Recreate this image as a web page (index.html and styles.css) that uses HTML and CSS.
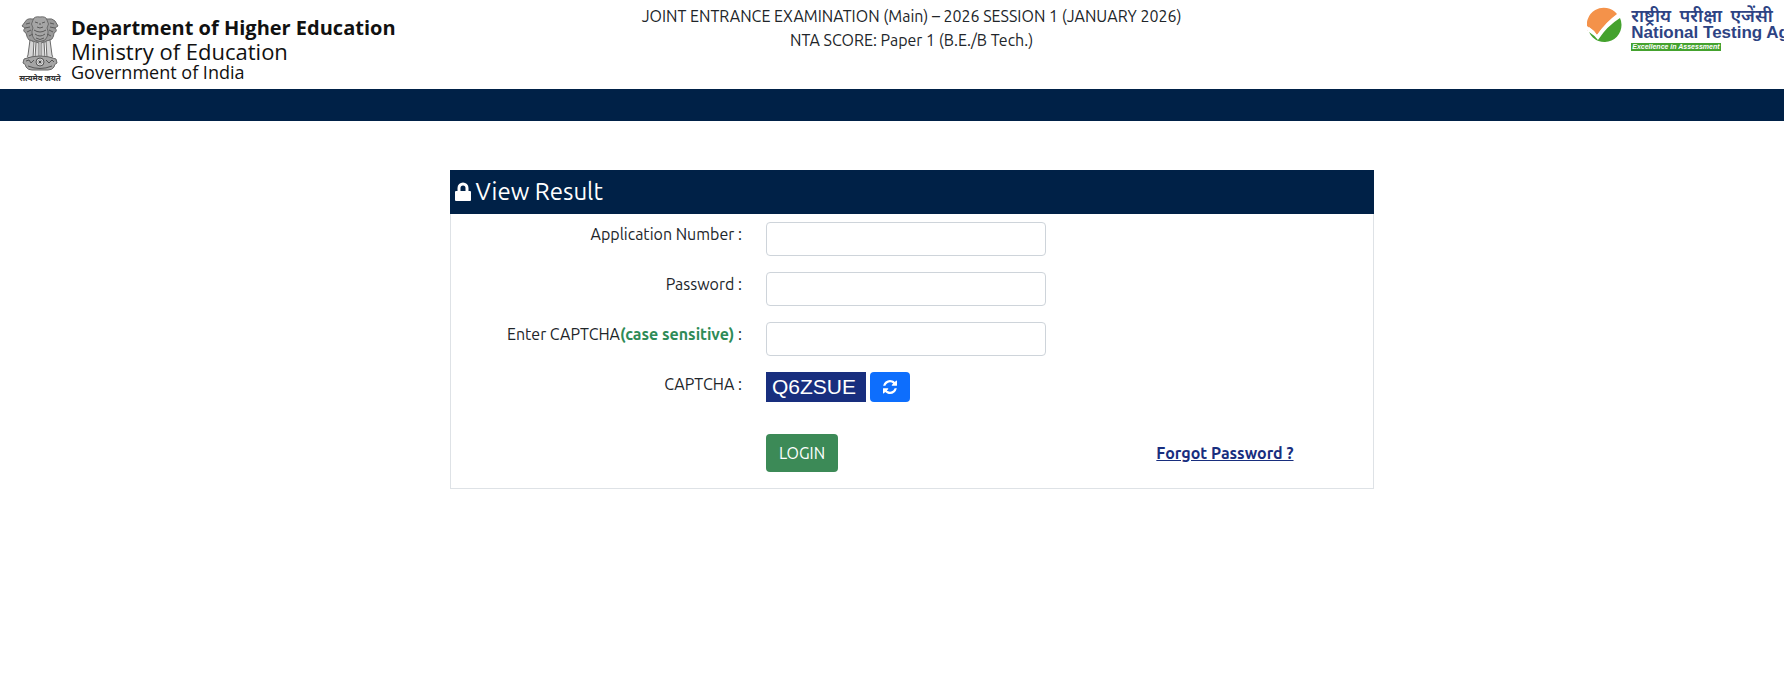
FILE: index.html
```
<!DOCTYPE html>
<html lang="en">
<head>
  <meta charset="UTF-8">
  <meta name="viewport" content="width=device-width, initial-scale=1">
  <title>View Result</title>
  <link rel="stylesheet" href="styles.css">
</head>
<body>
  <div class="page">
    <header class="header">
      <div class="brand">
        <div class="emblem">
          <svg viewBox="0 0 38 56" width="38" height="56" aria-hidden="true">
            <!-- lions -->
            <g fill="#9a9a9a" stroke="#6a6a6a" stroke-width="1">
              <path d="M11 3 Q6 2 4 6 L1 10 L4 12 Q1 15 5 17 Q6 22 8 24 L15 26 H24 L31 23 Q33 20 33 17 Q37 15 34 12 L37 10 L34 5 Q31 2 27 3 Z"/>
              <path d="M12 4 Q13 0 19 1 Q25 0 26 4 Q29 8 26 12 Q29 18 24 24 Q19 27 14 24 Q9 18 12 12 Q9 8 12 4 Z" fill="#a5a5a5"/>
            </g>
            <g fill="none" stroke="#5a5a5a" stroke-width="1">
              <path d="M14 6 L17 7 M24 6 L21 7 M18 8 H20 M16 11 Q19 13 22 11 M13 14 Q19 18 25 14 M14 18 Q19 22 24 18 M15 22 Q19 25 23 22"/>
              <path d="M5 8 L9 7 M4 12 L9 11 M6 16 L10 14 M8 20 L12 18 M33 8 L29 7 M34 12 L29 11 M32 16 L28 14 M30 20 L26 18"/>
            </g>
            <!-- legs -->
            <g fill="#d5d5d5" stroke="#6a6a6a" stroke-width="1">
              <path d="M9 24 L7 39 Q5 41 8 42 H12 L13 26 Z"/>
              <path d="M15 26 L14 42 H18 V27 Z"/>
              <path d="M20 27 V42 H24 L23 26 Z"/>
              <path d="M25 25 L26 42 H30 Q33 41 31 39 L29 24 Z"/>
            </g>
            <!-- abacus with wheel -->
            <path d="M3 43 Q19 37 35 43 L36 47 Q33 48 33 51 Q31 54 27 54 H11 Q7 54 5 51 Q5 48 2 47 Z" fill="#a5a5a5" stroke="#666"/>
            <path d="M5 45 L8 44 L10 47 L13 44 M25 44 L28 47 L31 44 L33 46 M7 50 Q19 55 31 50" fill="none" stroke="#555"/>
            <circle cx="19" cy="46" r="4" fill="#ddd" stroke="#555"/>
            <path d="M19 42 V50 M15 46 H23 M16 43 L22 49 M22 43 L16 49" stroke="#777" stroke-width=".6"/>
            <circle cx="19" cy="46" r="1" fill="#333"/>
          </svg>
          <span class="motto" lang="hi">सत्यमेव जयते</span>
        </div>
        <div class="dept">
          <strong>Department of Higher Education</strong>
          <span class="ministry">Ministry of Education</span>
          <span class="govt">Government of India</span>
        </div>
      </div>

      <div class="exam">
        JOINT ENTRANCE EXAMINATION (Main) – 2026 SESSION 1 (JANUARY 2026)<br>
        NTA SCORE: Paper 1 (B.E./B Tech.)
      </div>

      <div class="nta">
        <svg viewBox="0 0 36 36" width="36" height="36" aria-hidden="true">
          <path d="M1 24 A17 17 0 0 1 30 7 Q19 15 10 28 Q7 23 2 20 Z" fill="#f4924a"/>
          <path d="M0 19 Q5 22 10 28 Q19 15 31 7 L34 9 Q20 19 11 33 Q7 27 0 23 Z" fill="#fff"/>
          <path d="M33 11 A17 17 0 1 1 2 25 Q7 28 11 33 Q20 19 33 11 Z" fill="#44a22e"/>
        </svg>
        <div class="nta-text">
          <span class="nta-hi" lang="hi">राष्ट्रीय &nbsp;परीक्षा &nbsp;एजेंसी</span>
          <span class="nta-en">National Testing Agency</span>
          <span class="nta-tag">Excellence in Assessment</span>
        </div>
      </div>
    </header>

    <div class="navbar"></div>

    <main class="card">
      <h1 class="card-header">
        <svg viewBox="0 0 16 20" width="16" height="20" aria-hidden="true">
          <path d="M4 10 V6 a4 4 0 0 1 8 0 V10" fill="none" stroke="#fff" stroke-width="3"/>
          <rect y="9" width="16" height="10" rx="1" fill="#fff"/>
        </svg>
        View Result
      </h1>
      <form class="form">
        <div class="row">
          <label for="appNo">Application Number :</label>
          <input type="text" id="appNo">
        </div>
        <div class="row">
          <label for="password">Password :</label>
          <input type="password" id="password">
        </div>
        <div class="row">
          <label for="captchaInput">Enter CAPTCHA<b>(case sensitive)</b> :</label>
          <input type="text" id="captchaInput">
        </div>
        <div class="row">
          <span class="label">CAPTCHA :</span>
          <div class="captcha">
            <span class="captcha-code">Q6ZSUE</span>
            <button type="button" class="refresh" aria-label="Refresh captcha">
              <svg viewBox="0 0 1536 1536" width="14" height="14" aria-hidden="true">
                <path fill="#fff" d="M1511 928q0 5-1 7-64 268-268 434.500T764 1536q-146 0-282.500-55T238 1324l-129 129q-19 19-45 19t-45-19-19-45V960q0-26 19-45t45-19h448q26 0 45 19t19 45-19 45l-137 137q71 66 161 102t187 36q134 0 250-65t186-179q11-17 53-117 8-23 30-23h192q13 0 22.500 9.500t9.500 22.500zm25-800v448q0 26-19 45t-45 19h-448q-26 0-45-19t-19-45 19-45l138-138Q969 256 768 256q-134 0-250 65T332 500q-11 17-53 117-8 23-30 23H50q-13 0-22.500-9.500T18 608v-7q65-268 270-434.500T768 0q146 0 284 55.500T1297 212l130-129q19-19 45-19t45 19 19 45z"/>
              </svg>
            </button>
          </div>
        </div>
        <div class="row actions">
          <button type="submit" class="login">LOGIN</button>
          <a href="#" class="forgot">Forgot Password ?</a>
        </div>
      </form>
    </main>
  </div>
</body>
</html>
```
FILE: styles.css
```
* { box-sizing: border-box; }
body { margin: 0; background: #fff; color: #212529; font-family: Ubuntu, "Noto Sans", sans-serif; font-size: 16px; line-height: 24px; overflow-x: hidden; }
.page { width: 102.2%; }

.header { display: grid; grid-template-columns: 1fr auto 1fr; align-items: start; min-height: 89px; }
.brand { display: flex; gap: 10px; padding: 16px 0 0 19px; }
.emblem { display: flex; flex-direction: column; align-items: center; width: 42px; }
.motto { font-size: 8px; line-height: 14px; font-weight: bold; color: #333; white-space: nowrap; }
.dept { display: flex; flex-direction: column; color: #111; font-family: "Open Sans", sans-serif; white-space: nowrap; }
.dept strong { font-size: 20px; line-height: 24px; }
.ministry { font-size: 22px; line-height: 22px; }
.govt { font-size: 18px; line-height: 20px; }
.exam { padding-top: 4px; text-align: center; }

.nta { display: flex; gap: 8px; justify-self: end; width: 236px; padding-top: 7px; }
.nta svg { flex: none; }
.nta-text { display: flex; flex-direction: column; align-items: flex-start; color: #2d4383; white-space: nowrap; }
.nta-hi { font-size: 18px; line-height: 16px; font-weight: 600; }
.nta-en { font-family: "Liberation Sans", sans-serif; font-size: 17px; line-height: 20px; font-weight: bold; }
.nta-tag { background: #44a22e; color: #fff; font-family: "Liberation Sans", sans-serif; font-size: 7px; line-height: 8px; font-weight: bold; font-style: italic; padding: 0 1px; }

.navbar { height: 32px; background: #002147; }

.card { width: 924px; max-width: 96%; margin: 49px auto 0; border: 1px solid #dee2e6; }
.card-header { display: flex; align-items: center; gap: 5px; margin: -1px -1px 0; padding: 6px 5px; background: #002147; color: #fff; font-size: 24px; line-height: 32px; font-weight: normal; }
.form { padding: 8px 0 16px; }
.row { display: grid; grid-template-columns: 1fr 1fr 1fr; min-height: 50px; align-items: start; }
.row label, .row .label { padding-right: 16px; text-align: right; white-space: nowrap; }
.row label b { color: #2e8b57; }
.row input { height: 34px; margin: 0 19px 0 8px; padding: 4px 8px; border: 1px solid #ced4da; border-radius: 4px; font: inherit; }
.captcha { display: flex; gap: 4px; margin-left: 8px; }
.captcha-code { padding: 0 10px 0 6px; background: #182e7e; color: #fff; font-family: "Liberation Sans", sans-serif; font-size: 21px; line-height: 30px; }
.refresh { display: flex; align-items: center; justify-content: center; width: 40px; height: 30px; padding: 0; border: 0; border-radius: 4px; background: #0d6efd; }
.actions { align-items: center; padding-top: 12px; }
.login { grid-column: 2; justify-self: start; margin-left: 8px; padding: 7px 13px; border: 0; border-radius: 4px; background: #3c8a57; color: #fff; font: inherit; }
.forgot { justify-self: center; margin-left: 12px; color: #182e7e; font-weight: bold; }
```
